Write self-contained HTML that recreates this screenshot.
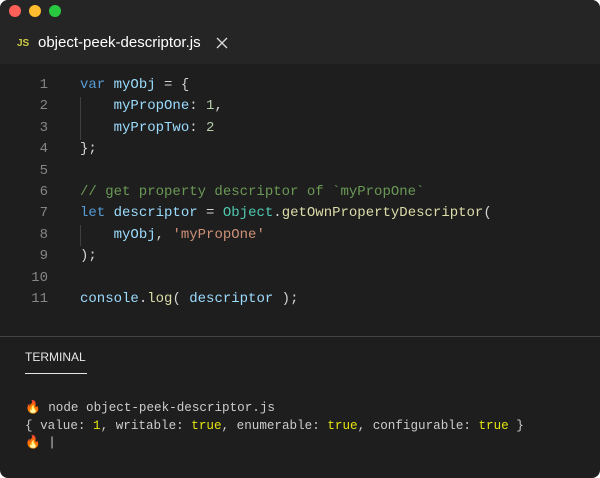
<!DOCTYPE html><html><head><style>
body{margin:0;width:600px;height:478px;background:#fff;overflow:hidden;font-family:"Liberation Sans",sans-serif}
.win{position:absolute;left:0;top:0;width:600px;height:478px;background:#1e1e1e;border-radius:8px;overflow:hidden}
.top{position:absolute;left:0;top:0;width:600px;height:64px;background:#252526}
.dot{position:absolute;top:5px;width:12px;height:12px;border-radius:50%}
.tab{position:absolute;left:0;top:24px;height:40px;width:245px}
.js{position:absolute;left:17px;top:14px;font-size:10px;color:#cbcb41;font-weight:bold}
.fn{position:absolute;left:38px;top:10px;font-size:15px;color:#fff}
.code{position:absolute;left:0;top:75px;font-family:"Liberation Mono",monospace;font-size:14px;line-height:21.4px;white-space:pre;color:#d4d4d4}
.ln{position:absolute;left:0;top:0;width:48px;text-align:right;color:#858585}
.c{position:absolute;left:80px;top:0}
.k{color:#569cd6}.v{color:#9cdcfe}.n{color:#b5cea8}.cm{color:#6a9955}.s{color:#ce9178}.t{color:#4ec9b0}.f{color:#dcdcaa}
.guide{position:absolute;left:80px;width:1px;background:#404040}
.sep{position:absolute;left:0;top:336px;width:600px;height:1px;background:#444}
.term{position:absolute;left:25px;top:350px;font-size:12px;color:#e7e7e7}
.ul{position:absolute;left:25px;top:373px;width:62px;height:1px;background:#e7e7e7}
.out{position:absolute;left:25px;top:400px;font-family:"Liberation Mono",monospace;font-size:12.6px;line-height:17.5px;white-space:pre;color:#ccc}
.y{color:#e5e510}
</style></head><body><div class="win">
<div class="top"><div class="dot" style="left:9px;background:#fe5f57"></div><div class="dot" style="left:29px;background:#febc2e"></div><div class="dot" style="left:49px;background:#28c840"></div>
<div class="tab"><span class="js">JS</span><span class="fn">object-peek-descriptor.js</span>
<svg style="position:absolute;left:216px;top:13px" width="12" height="12" viewBox="0 0 12 12"><path d="M1 1L11 11M11 1L1 11" stroke="#ddd" stroke-width="1.3"/></svg></div></div>
<div class="guide" style="top:97px;height:43px"></div>
<div class="guide" style="top:225px;height:21px"></div>
<div class="code"><div class="ln">1
2
3
4
5
6
7
8
9
10
11</div><div class="c"><span class="k">var</span> <span class="v">myObj</span> = {
    <span class="v">myPropOne</span>: <span class="n">1</span>,
    <span class="v">myPropTwo</span>: <span class="n">2</span>
};

<span class="cm">// get property descriptor of `myPropOne`</span>
<span class="k">let</span> <span class="v">descriptor</span> = <span class="t">Object</span>.<span class="f">getOwnPropertyDescriptor</span>(
    <span class="v">myObj</span>, <span class="s">'myPropOne'</span>
);

<span class="v">console</span>.<span class="f">log</span>( <span class="v">descriptor</span> );</div></div>
<div class="sep"></div>
<div class="term">TERMINAL</div><div class="ul"></div>
<div class="out">🔥 node object-peek-descriptor.js
{ value: <span class="y">1</span>, writable: <span class="y">true</span>, enumerable: <span class="y">true</span>, configurable: <span class="y">true</span> }
🔥 |</div>
</div></body></html>
